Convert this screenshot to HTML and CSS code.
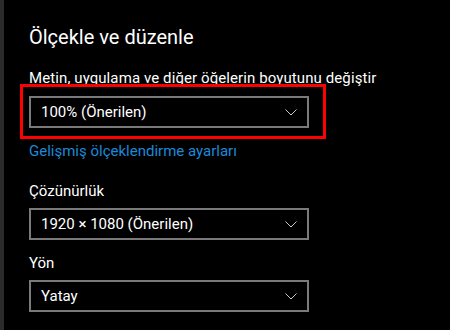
FILE: index.html
```html
<!DOCTYPE html>
<html lang="tr">
<head>
    <meta charset="UTF-8">
    <meta name="viewport" content="width=device-width, initial-scale=1.0">
    <title>Ölçekle ve düzenle</title>
    <link rel="stylesheet" href="styles.css">
</head>
<body>
    <div class="page">
        <div class="side-strip"></div>
        <div class="content">
            <h1 class="title">Ölçekle ve düzenle</h1>

            <p class="label first">Metin, uygulama ve diğer öğelerin boyutunu değiştir</p>
            <div class="select">
                <span>100% (Önerilen)</span>
                <svg class="chevron" width="12" height="7" viewBox="0 0 12 7"><path d="M0.5 0.5 L6 6 L11.5 0.5" fill="none" stroke="#c8c8c8" stroke-width="1"/></svg>
            </div>
            <a class="link" href="#">Gelişmiş ölçeklendirme ayarları</a>

            <p class="label">Çözünürlük</p>
            <div class="select">
                <span>1920 × 1080 (Önerilen)</span>
                <svg class="chevron" width="12" height="7" viewBox="0 0 12 7"><path d="M0.5 0.5 L6 6 L11.5 0.5" fill="none" stroke="#c8c8c8" stroke-width="1"/></svg>
            </div>

            <p class="label">Yön</p>
            <div class="select">
                <span>Yatay</span>
                <svg class="chevron" width="12" height="7" viewBox="0 0 12 7"><path d="M0.5 0.5 L6 6 L11.5 0.5" fill="none" stroke="#c8c8c8" stroke-width="1"/></svg>
            </div>
        </div>
    </div>

    <!-- kırmızı vurgulama çerçevesi -->
    <div class="highlight"></div>
</body>
</html>
```

FILE: styles.css
```css
body {
    margin: 0;
    background-color: #000;
    color: #fff;
    font-family: Roboto, "Noto Sans", sans-serif;
    font-size: 15px;
    height: 330px;
    overflow: hidden;
}
.page {
    display: flex;
    height: 330px;
}
.side-strip {
    width: 4px;
    background-color: #2b2b2b;
}
.content {
    padding: 23px 0 0 25px;
    display: flex;
    flex-direction: column;
    align-items: flex-start;
}
.title {
    margin: 0;
    font-size: 20px;
    font-weight: 400;
    line-height: 28px;
}
.label {
    margin: 13px 0 7px;
    line-height: 20px;
}
.label.first {
    margin-top: 17px;
    margin-bottom: 8px;
    letter-spacing: 0.1px;
}
.select {
    box-sizing: border-box;
    width: 280px;
    height: 32px;
    border: 2px solid #7a7a7a;
    padding: 0 10px;
    display: flex;
    align-items: center;
    justify-content: space-between;
}
.chevron {
    display: block;
}
.link {
    margin-top: 13px;
    line-height: 20px;
    color: #1a8ad9;
    text-decoration: none;
}
.link + .label {
    margin-top: 20px;
}

/* Vurgulama */
.highlight {
    position: absolute;
    left: 20px;
    top: 84px;
    width: 306px;
    height: 55px;
    box-sizing: border-box;
    border: 3px solid #ff0000;
}
```
